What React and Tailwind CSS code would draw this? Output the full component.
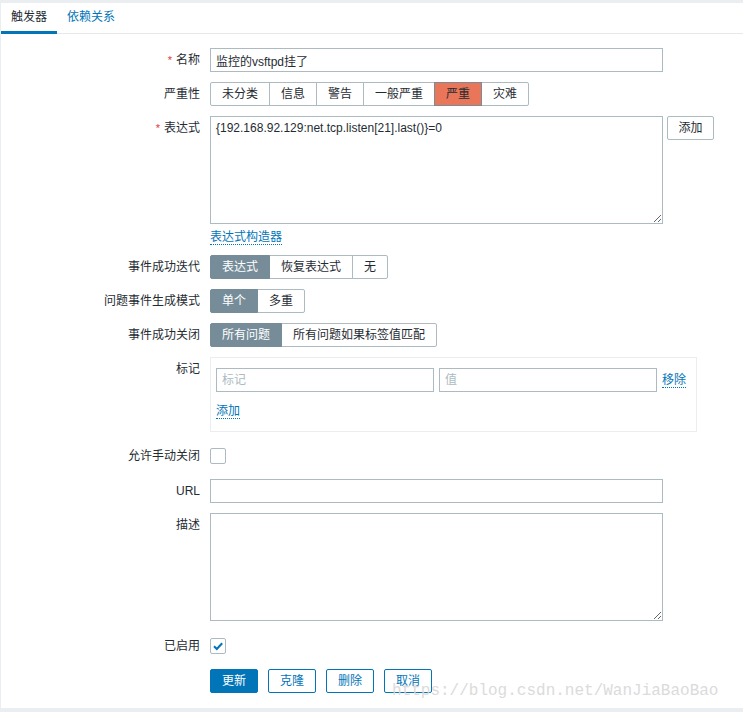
import React from "react";
import clsx from "clsx";

const FONT = { fontFamily: '"Liberation Sans", Arial, "Noto Sans CJK SC", sans-serif' };

const Row = ({ label, required, className, children }) => (
  <div className={clsx("flex items-start", className)}>
    <div className="w-[199px] shrink-0 text-right leading-[24px] text-[#1f2c33]">
      {required && <span className="text-[#e33734] mr-[4px] text-[11px]">*</span>}
      {label}
    </div>
    <div className="ml-[10px] flex items-start">{children}</div>
  </div>
);

const Seg = ({ items, active, activeClass }) => (
  <div className="flex">
    {items.map((t, i) => (
      <div
        key={t}
        className={clsx(
          "h-[24px] px-[11px] border leading-[22px] whitespace-nowrap",
          i > 0 && "-ml-px",
          i === 0 && "rounded-l-[2px]",
          i === items.length - 1 && "rounded-r-[2px]",
          i === active ? clsx("relative z-10", activeClass) : "border-[#acbbc2] bg-white text-[#1f2c33]"
        )}
      >
        {t}
      </div>
    ))}
  </div>
);

const Checkbox = ({ checked }) => (
  <div className="w-[16px] h-[16px] border border-[#acbbc2] rounded-[2px] bg-white flex items-center justify-center">
    {checked && (
      <svg width="12" height="12" viewBox="0 0 12 12">
        <path d="M2 6.2 L4.8 9 L10.2 3.2" fill="none" stroke="#0275b8" strokeWidth="2" />
      </svg>
    )}
  </div>
);

const Input = ({ value, placeholder, className }) => (
  <input
    readOnly
    value={value}
    placeholder={placeholder}
    className={clsx(
      "h-[24px] border border-[#acbbc2] bg-white px-[5px] text-[12px] text-[#1f2c33] outline-none placeholder:text-[#acbbc2]",
      className
    )}
    style={FONT}
  />
);

const Link = ({ children, className }) => (
  <span className={clsx("inline-block text-[#0275b8] leading-[14px] border-b border-dotted border-[#0275b8]", className)}>
    {children}
  </span>
);

export default function App() {
  return (
    <div className="w-[743px] h-[712px] bg-[#ebeef0] pt-[3px] pl-[1px] text-[12px] text-[#1f2c33] relative overflow-hidden" style={FONT}>
      <div className="bg-white h-[705px]">
        {/* tabs */}
        <div className="flex h-[31px] border-b border-[#e4e8ea]">
          <div className="px-[10px] h-[31px] leading-[28px] border-b-[3px] border-[#0275b8] text-[#1f2c33]">触发器</div>
          <div className="px-[10px] h-[31px] leading-[28px] text-[#0275b8]">依赖关系</div>
        </div>

        <div className="pt-[14px] flex flex-col">
          <Row label="名称" required>
            <Input value="监控的vsftpd挂了" className="w-[453px]" />
          </Row>

          <Row label="严重性" className="mt-[10px]">
            <Seg
              items={["未分类", "信息", "警告", "一般严重", "严重", "灾难"]}
              active={4}
              activeClass="bg-[#e97659] border-[#768d99] text-[#1f2c33]"
            />
          </Row>

          <Row label="表达式" required className="mt-[10px]">
            <div className="flex flex-col items-start">
              <textarea
                readOnly
                value="{192.168.92.129:net.tcp.listen[21].last()}=0"
                className="w-[453px] h-[108px] border border-[#acbbc2] px-[5px] py-[4px] leading-[14px] text-[12px] text-[#1f2c33] outline-none"
                style={FONT}
              />
              <Link className="mt-[6px]">表达式构造器</Link>
            </div>
            <div className="ml-[4px] w-[47px] h-[24px] border border-[#acbbc2] rounded-[2px] text-center leading-[22px] bg-white">添加</div>
          </Row>

          <Row label="事件成功迭代" className="mt-[10px]">
            <Seg items={["表达式", "恢复表达式", "无"]} active={0} activeClass="bg-[#768d99] border-[#768d99] text-white" />
          </Row>

          <Row label="问题事件生成模式" className="mt-[10px]">
            <Seg items={["单个", "多重"]} active={0} activeClass="bg-[#768d99] border-[#768d99] text-white" />
          </Row>

          <Row label="事件成功关闭" className="mt-[10px]">
            <Seg items={["所有问题", "所有问题如果标签值匹配"]} active={0} activeClass="bg-[#768d99] border-[#768d99] text-white" />
          </Row>

          <Row label="标记" className="mt-[10px]">
            <div className="w-[487px] border border-[#ebeef0] pt-[10px] pb-[11px] px-[5px]">
              <div className="flex items-center">
                <Input placeholder="标记" className="w-[218px]" />
                <Input placeholder="值" className="w-[218px] ml-[5px]" />
                <Link className="ml-[5px]">移除</Link>
              </div>
              <Link className="mt-[12px]">添加</Link>
            </div>
          </Row>

          <Row label="允许手动关闭" className="mt-[12px]">
            <div className="h-[24px] flex items-center">
              <Checkbox />
            </div>
          </Row>

          <Row label="URL" className="mt-[11px]">
            <Input value="" className="w-[453px]" />
          </Row>

          <Row label="描述" className="mt-[10px]">
            <textarea
              readOnly
              value=""
              className="w-[453px] h-[108px] border border-[#acbbc2] px-[5px] py-[4px] outline-none"
            />
          </Row>

          <Row label="已启用" className="mt-[13px]">
            <div className="h-[24px] flex items-center">
              <Checkbox checked />
            </div>
          </Row>

          <div className="flex mt-[11px] ml-[209px] gap-[10px]">
            <div className="w-[48px] h-[24px] rounded-[2px] bg-[#0275b8] border border-[#0275b8] text-white text-center leading-[22px]">更新</div>
            {["克隆", "删除", "取消"].map((t) => (
              <div key={t} className="w-[48px] h-[24px] rounded-[2px] bg-white border border-[#0275b8] text-[#0275b8] text-center leading-[22px]">
                {t}
              </div>
            ))}
          </div>
        </div>
      </div>

      {/* watermark */}
      <div
        className="absolute left-[392px] top-[681px] text-[16px] leading-[20px] text-[#d8d8d8] opacity-90 pointer-events-none"
        style={{ fontFamily: '"Liberation Mono", "DejaVu Sans Mono", monospace' }}
      >
        https://blog.csdn.net/WanJiaBaoBao
      </div>
    </div>
  );
}
